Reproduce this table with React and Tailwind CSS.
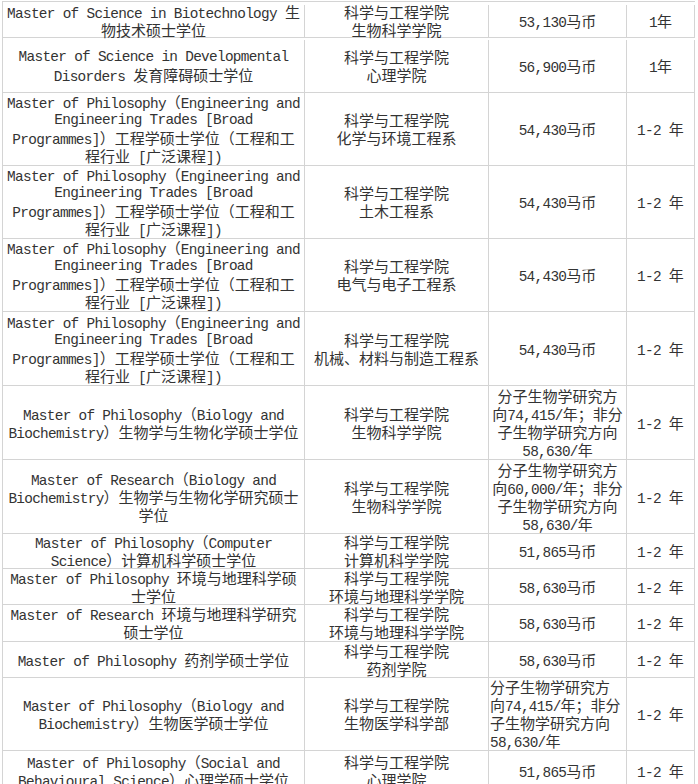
import React from "react";

const CJK = /[\u3000-\u303f\u4e00-\u9fff\uff00-\uffef]/;
const SPLIT = /[\u3000-\u303f\u4e00-\u9fff\uff00-\uffef]+|[^\u3000-\u303f\u4e00-\u9fff\uff00-\uffef]+/g;

const ENG = [
  "Master of Philosophy（Engineering and",
  "Engineering Trades [Broad",
  "Programmes]）工程学硕士学位（工程和工",
  "程行业 [广泛课程])",
];
const SCHOOL = "科学与工程学院";
const MOLE = (n) => ["分子生物学研究方", `向${n}/年；非分`, "子生物学研究方向", "58,630/年"];

const rows = [
  { h: "h-[36px] pt-[3px]", c: [["Master of Science in Biotechnology 生", "物技术硕士学位"], [SCHOOL, "生物科学学院"], ["53,130马币"], ["1年"]] },
  { h: "h-[55px] pt-[2px]", c: [["Master of Science in Developmental", "Disorders 发育障碍硕士学位"], [SCHOOL, "心理学院"], ["56,900马币"], ["1年"]] },
  { h: "h-[73px]", c: [ENG, [SCHOOL, "化学与环境工程系"], ["54,430马币"], ["1-2 年"]] },
  { h: "h-[73px]", c: [ENG, [SCHOOL, "土木工程系"], ["54,430马币"], ["1-2 年"]] },
  { h: "h-[73px]", c: [ENG, [SCHOOL, "电气与电子工程系"], ["54,430马币"], ["1-2 年"]] },
  { h: "h-[74px]", c: [ENG, [SCHOOL, "机械、材料与制造工程系"], ["54,430马币"], ["1-2 年"]] },
  { h: "h-[74px]", c: [["Master of Philosophy（Biology and", "Biochemistry）生物学与生物化学硕士学位"], [SCHOOL, "生物科学学院"], MOLE("74,415"), ["1-2 年"]] },
  { h: "h-[74px]", c: [["Master of Research（Biology and", "Biochemistry）生物学与生物化学研究硕士", "学位"], [SCHOOL, "生物科学学院"], MOLE("60,000"), ["1-2 年"]] },
  { h: "h-[35px]", c: [["Master of Philosophy（Computer", "Science）计算机科学硕士学位"], [SCHOOL, "计算机科学学院"], ["51,865马币"], ["1-2 年"]] },
  { h: "h-[36px]", c: [["Master of Philosophy 环境与地理科学硕", "士学位"], [SCHOOL, "环境与地理科学学院"], ["58,630马币"], ["1-2 年"]] },
  { h: "h-[37px]", c: [["Master of Research 环境与地理科学研究", "硕士学位"], [SCHOOL, "环境与地理科学学院"], ["58,630马币"], ["1-2 年"]] },
  { h: "h-[36px]", c: [["Master of Philosophy 药剂学硕士学位"], [SCHOOL, "药剂学院"], ["58,630马币"], ["1-2 年"]] },
  { h: "h-[73px]", c: [["Master of Philosophy（Biology and", "Biochemistry）生物医学硕士学位"], [SCHOOL, "生物医学科学部"], MOLE("74,415"), ["1-2 年"]], left3: true },
  { h: "h-[40px]", c: [["Master of Philosophy（Social and", "Behavioural Science）心理学硕士学位"], [SCHOOL, "心理学院"], ["51,865马币"], ["1-2 年"]] },
];

const widths = ["w-[302px]", "w-[184px]", "w-[138px]", "w-[68px]"];

function Line({ text }) {
  const parts = text.match(SPLIT) || [];
  return (
    <div className="flex h-[18px] items-baseline whitespace-pre">
      {parts.map((p, i) =>
        CJK.test(p) ? (
          <span key={i} className="font-['Noto_Sans_CJK_SC',sans-serif] text-[15px] leading-[18px]">{p}</span>
        ) : (
          <span key={i} className="font-['Liberation_Mono',monospace] text-[14.4px] tracking-[-0.7px] leading-[18px]">{p}</span>
        )
      )}
    </div>
  );
}

export default function App() {
  return (
    <div className="min-h-screen bg-white text-[#333333]">
      <div className="ml-[2px] mt-px w-[693px] border-l border-t border-[#d4d4d4]">
        {rows.map((r, i) => (
          <div key={i} className={`flex border-b border-[#d4d4d4] ${r.h}`}>
            {r.c.map((lines, j) => (
              <div
                key={j}
                className={`${widths[j]} shrink-0 border-r border-[#d4d4d4] flex flex-col justify-center ${
                  j === 2 && r.left3 ? "items-start pl-px" : "items-center"
                }`}
              >
                {lines.map((t, k) => (
                  <Line key={k} text={t} />
                ))}
              </div>
            ))}
          </div>
        ))}
      </div>
    </div>
  );
}
